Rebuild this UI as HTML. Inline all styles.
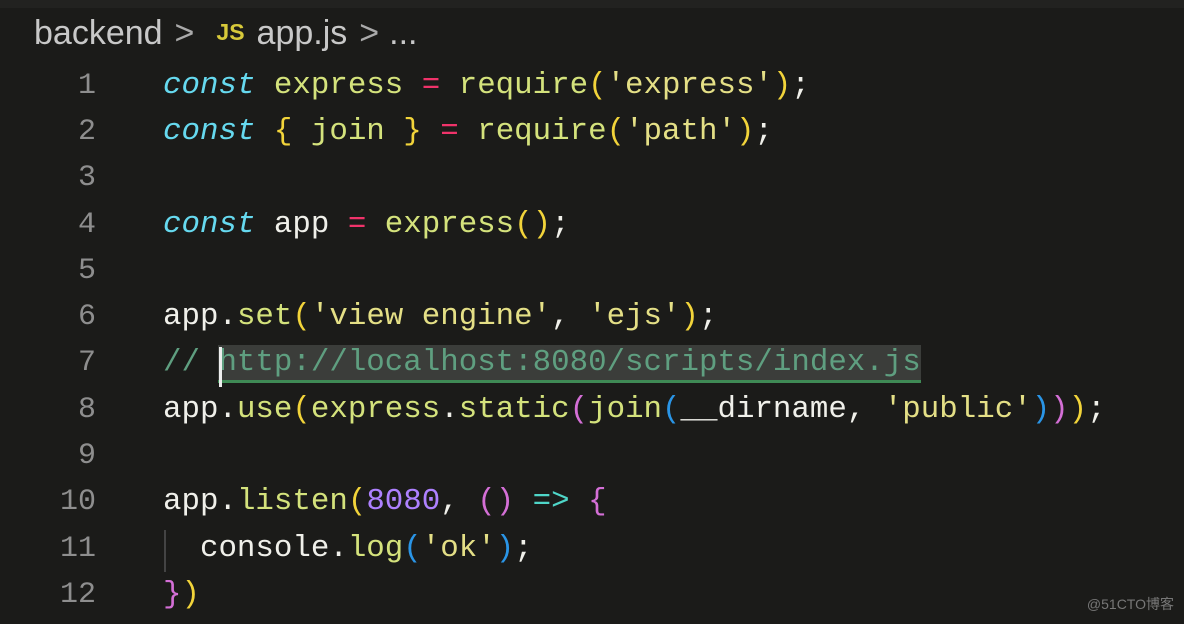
<!DOCTYPE html><html><head><meta charset="utf-8"><style>
body{margin:0;width:1184px;height:624px;background:#1b1b19;overflow:hidden;position:relative;font-family:"Liberation Mono",monospace}
.bc{position:absolute;left:34px;top:14px;font:34px "Liberation Sans",sans-serif;color:#c8c8c8}
.bc .js{color:#d7c93a;font-weight:bold;font-size:23px;margin:0 12px 0 12px;vertical-align:4px}
.bc .sep{color:#aaa;margin:0 10px 0 12px}
.ln{position:absolute;left:40px;width:56px;text-align:right;color:#8e8e8e;font-size:30px}
.cd{position:absolute;left:163px;font-size:30.8px;color:#f0f0ea;white-space:pre}
.k{color:#66d9ef;font-style:italic}.f{color:#d4e27c}.s{color:#e4df86}.o{color:#f0336a}.n{color:#ae81ff}
.y{color:#f2d43a}.p{color:#d46fd6}.b{color:#2a95e6}.c{color:#5f9f80}.a{color:#4fd6c8}
.hl{background:#3b3d3a;border-bottom:3px solid #3f8a55}
.wm{position:absolute;right:10px;bottom:10px;font:14px "Liberation Sans","Noto Sans CJK SC",sans-serif;color:#777}
</style></head><body>
<div class="bc">backend<span class="sep">&gt;</span><span class="js">JS</span>app.js<span class="sep">&gt;</span>...</div>
<div style="position:absolute;left:0;top:0;width:1184px;height:8px;background:#222220"></div>
<div class="ln" style="top:69px">1</div><div class="cd" style="top:68px"><span class="k">const</span> <span class="f">express</span> <span class="o">=</span> <span class="f">require</span><span class="y">(</span><span class="s">'express'</span><span class="y">)</span>;</div>
<div class="ln" style="top:115px">2</div><div class="cd" style="top:114px"><span class="k">const</span> <span class="y">{</span> <span class="f">join</span> <span class="y">}</span> <span class="o">=</span> <span class="f">require</span><span class="y">(</span><span class="s">'path'</span><span class="y">)</span>;</div>
<div class="ln" style="top:161px">3</div>
<div class="ln" style="top:208px">4</div><div class="cd" style="top:207px"><span class="k">const</span> app <span class="o">=</span> <span class="f">express</span><span class="y">()</span>;</div>
<div class="ln" style="top:254px">5</div>
<div class="ln" style="top:300px">6</div><div class="cd" style="top:299px">app.<span class="f">set</span><span class="y">(</span><span class="s">'view engine'</span>, <span class="s">'ejs'</span><span class="y">)</span>;</div>
<div class="ln" style="top:346px">7</div><div class="cd" style="top:345px"><span class="c">// <span class="hl">http://localhost:8080/scripts/index.js</span></span></div>
<div style="position:absolute;left:219px;top:347px;width:3px;height:40px;background:#eee"></div>
<div class="ln" style="top:393px">8</div><div class="cd" style="top:392px">app.<span class="f">use</span><span class="y">(</span><span class="f">express</span>.<span class="f">static</span><span class="p">(</span><span class="f">join</span><span class="b">(</span>__dirname, <span class="s">'public'</span><span class="b">)</span><span class="p">)</span><span class="y">)</span>;</div>
<div class="ln" style="top:439px">9</div>
<div class="ln" style="top:485px">10</div><div class="cd" style="top:484px">app.<span class="f">listen</span><span class="y">(</span><span class="n">8080</span>, <span class="p">()</span> <span class="a">=&gt;</span> <span class="p">{</span></div>
<div class="ln" style="top:532px">11</div><div class="cd" style="top:531px">  console.<span class="f">log</span><span class="b">(</span><span class="s">'ok'</span><span class="b">)</span>;</div>
<div style="position:absolute;left:164px;top:530px;width:2px;height:42px;background:#444"></div>
<div class="ln" style="top:578px">12</div><div class="cd" style="top:577px"><span class="p">}</span><span class="y">)</span></div>
<div class="wm">@51CTO博客</div>
</body></html>
